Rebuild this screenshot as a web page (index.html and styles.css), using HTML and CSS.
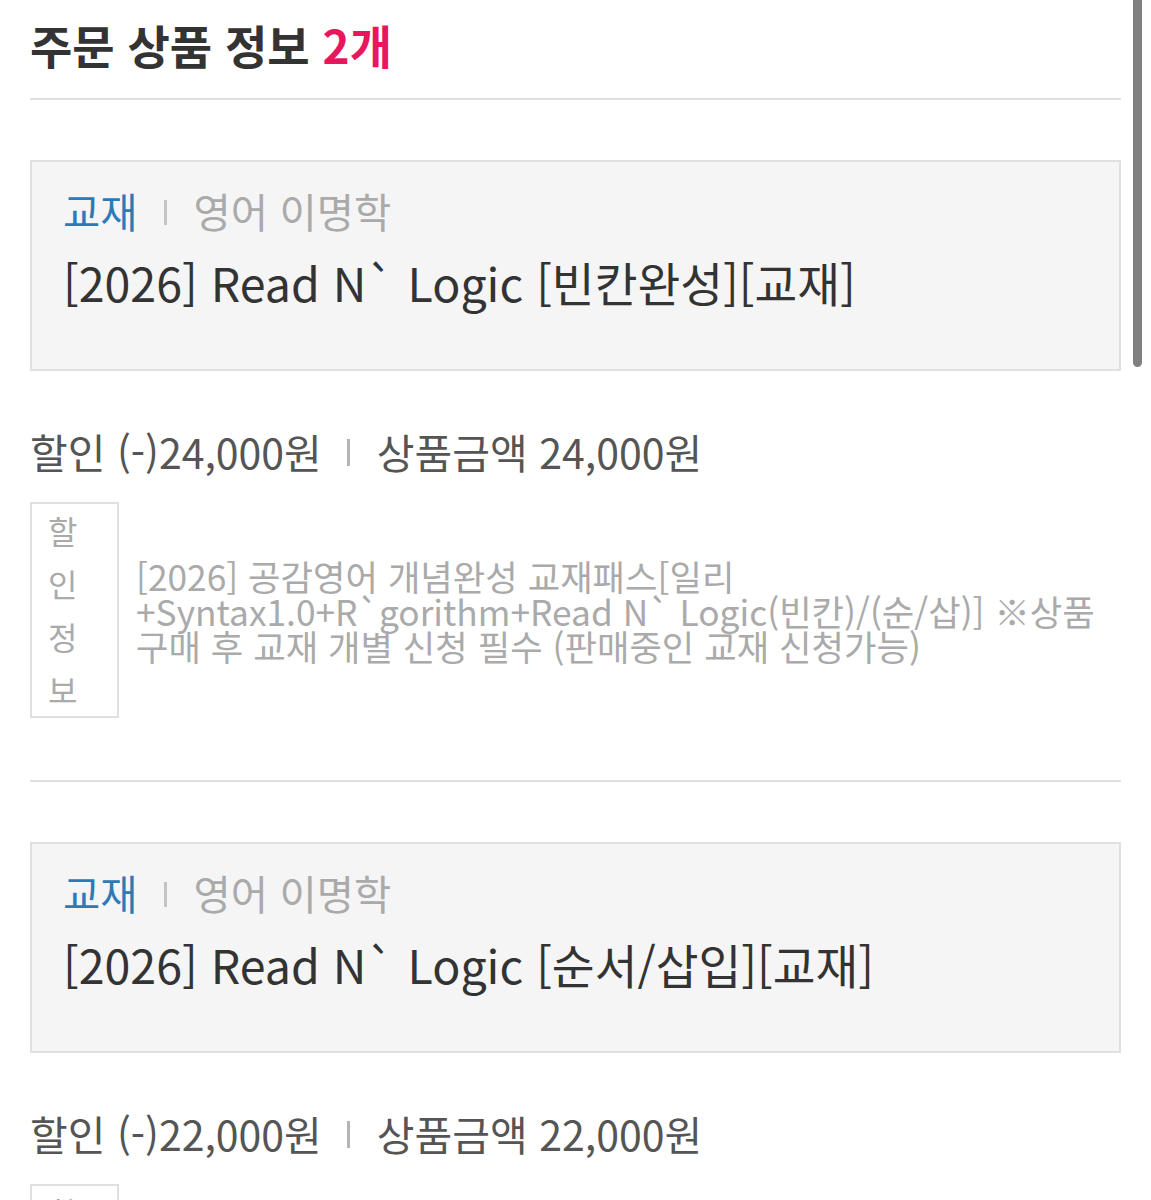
FILE: index.html
```html
<!DOCTYPE html>
<html lang="ko">
<head>
<meta charset="utf-8">
<link rel="stylesheet" href="styles.css">
</head>
<body>
<div class="page">
  <h2 class="heading">주문 상품 정보 <span class="count">2개</span></h2>
  <div class="rule"></div>

  <section class="item">
    <div class="card">
      <div class="meta"><span class="cat">교재</span><span class="sep"></span><span class="teacher">영어 이명학</span></div>
      <div class="name">[2026] Read N` Logic [빈칸완성][교재]</div>
    </div>
    <div class="price"><span>할인 (-)24,000원</span><span class="sep"></span><span>상품금액 24,000원</span></div>
    <div class="discount">
      <div class="dlabel"><span>할</span><span>인</span><span>정</span><span>보</span></div>
      <div class="dtext">[2026] 공감영어 개념완성 교재패스[일리<br>+Syntax1.0+R`gorithm+Read N` Logic(빈칸)/(순/삽)] ※상품<br>구매 후 교재 개별 신청 필수 (판매중인 교재 신청가능)</div>
    </div>
  </section>
  <div class="rule rule-item"></div>

  <section class="item">
    <div class="card">
      <div class="meta"><span class="cat">교재</span><span class="sep"></span><span class="teacher">영어 이명학</span></div>
      <div class="name">[2026] Read N` Logic [순서/삽입][교재]</div>
    </div>
    <div class="price"><span>할인 (-)22,000원</span><span class="sep"></span><span>상품금액 22,000원</span></div>
    <div class="discount">
      <div class="dlabel"><span>할</span><span>인</span><span>정</span><span>보</span></div>
      <div class="dtext">[2026] 공감영어 개념완성 교재패스[일리<br>+Syntax1.0+R`gorithm+Read N` Logic(빈칸)/(순/삽)] ※상품<br>구매 후 교재 개별 신청 필수 (판매중인 교재 신청가능)</div>
    </div>
  </section>
</div>
<div class="scrollbar"></div>
</body>
</html>
```

FILE: styles.css
```css
html, body {
  margin: 0;
  padding: 0;
  background: #fff;
  overflow: hidden;
}
body {
  font-family: "Noto Sans CJK KR", "Noto Sans", sans-serif;
  color: #333;
}
.page {
  padding: 14px 30px 0 30px;
}
.heading {
  margin: 0;
  font-size: 46px;
  line-height: 60px;
  font-weight: 700;
  color: #333;
}
.count {
  color: #e8175d;
}
.rule {
  height: 2px;
  background: #e0e0e0;
  margin-top: 24px;
}
.rule-item {
  margin-top: 62px;
}
.item {
  padding-top: 60px;
}
.card {
  background: #f5f5f5;
  border: 2px solid #e0e0e0;
  padding: 24px 31px 57px 31px;
}
.meta {
  display: flex;
  align-items: center;
  font-size: 40.5px;
  line-height: 50px;
}
.cat {
  color: #2b7bb8;
}
.teacher {
  color: #aaa;
}
.meta .sep {
  width: 3px;
  height: 25px;
  background: #c4c4c4;
  margin: 2px 27px 0 26px;
}
.name {
  margin-top: 16px;
  font-size: 46.5px;
  line-height: 60px;
  color: #333;
}
.price {
  display: flex;
  align-items: center;
  margin-top: 52px;
  font-size: 41px;
  line-height: 56px;
  color: #555;
}
.price .sep {
  width: 3px;
  height: 27px;
  background: #b4b4b4;
  margin: 2px 27px 0 25px;
}
.discount {
  display: flex;
  align-items: center;
  margin-top: 23px;
}
.dlabel {
  display: flex;
  flex-direction: column;
  width: 69px;
  border: 2px solid #e0e0e0;
  padding: 0 0 0 16px;
  font-size: 32px;
  line-height: 53px;
  color: #aaa;
  flex: none;
}
.dtext {
  margin-left: 17px;
  font-size: 35.3px;
  line-height: 35px;
  color: #aaa;
  white-space: nowrap;
}
.scrollbar {
  position: fixed;
  top: 0;
  left: 1133px;
  width: 9px;
  height: 367px;
  background: #808080;
  border-radius: 0 0 5px 5px;
}
```
